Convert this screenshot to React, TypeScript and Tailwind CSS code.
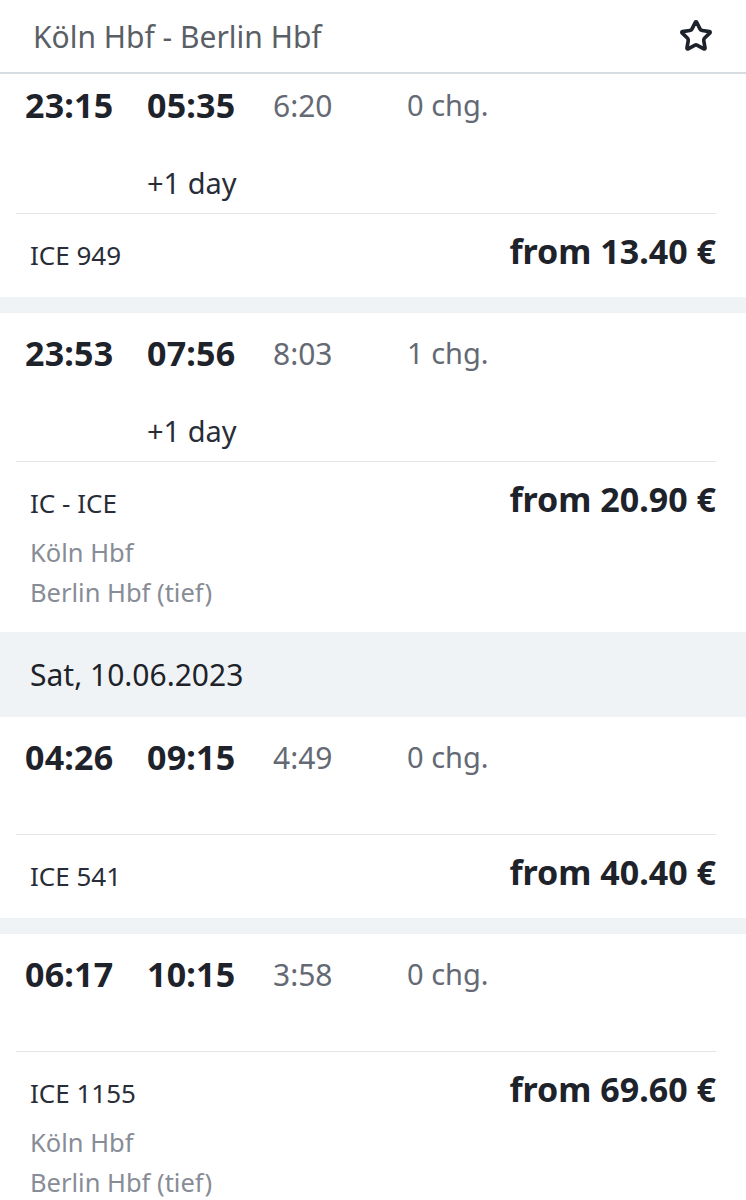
import { Star } from "lucide-react";

interface Connection {
  dep: string;
  arr: string;
  dur: string;
  chg: string;
  nextDay?: boolean;
  train: string;
  price: string;
  stations?: string[];
  first?: boolean;
}

const ConnectionCard = (props: Connection) => {
  return (
    <div className="bg-white">
      <div className={`ml-4 mr-[30px] ${props.first ? "pt-[13px]" : "pt-[22px]"}`}>
        {/* times row */}
        <div className="flex items-center h-[36px] pl-[9px]">
          <div className="w-[122px] text-[34px] font-bold text-[#1e232b] tracking-[0.2px]">{props.dep}</div>
          <div className="w-[126px] text-[34px] font-bold text-[#1e232b] tracking-[0.2px]">{props.arr}</div>
          <div className="w-[134px] text-[30px] text-[#646973]">{props.dur}</div>
          <div className="text-[29px] text-[#646973]">{props.chg}</div>
        </div>
        {props.nextDay ? (
          <div className="mt-[42px] h-[36px] pb-3 box-content flex items-center pl-[131px] text-[29px] text-[#282d37]">
            +1 day
          </div>
        ) : (
          <div className="h-[59px]"></div>
        )}
        <div className="border-t border-[#e3e5e9]"></div>
        {/* train + price */}
        <div className={`pt-6 ${props.stations ? "pb-5" : "pb-[25px]"}`}>
          <div className="flex justify-between items-start">
            <div className="pl-[14px] h-[34px] flex items-center text-[26px] text-[#282d37]">{props.train}</div>
            <div className="h-[34px] -mt-1 flex items-center text-[34px] font-bold text-[#1e232b]">{props.price}</div>
          </div>
          {props.stations && (
            <div className="mt-3 pl-[14px]">
              {props.stations.map((s) => (
                <div key={s} className="h-[40px] flex items-center text-[25.5px] text-[#878c96]">
                  {s}
                </div>
              ))}
            </div>
          )}
        </div>
      </div>
    </div>
  );
};

const Gap = () => <div className="h-4 bg-[#f0f3f5]"></div>;

export default function App() {
  return (
    <div className="w-[746px] h-[1200px] overflow-hidden bg-white" style={{ fontFamily: '"Noto Sans", sans-serif' }}>
      {/* header */}
      <div className="h-[74px] border-b-2 border-[#d7dce1] flex items-center justify-between pl-[33px] pr-[33px]">
        <div className="text-[30px] text-[#5a5f66]">Köln Hbf - Berlin Hbf</div>
        <Star size={34} strokeWidth={2.6} className="text-[#1e232b]" />
      </div>

      <ConnectionCard first dep="23:15" arr="05:35" dur="6:20" chg="0 chg." nextDay train="ICE 949" price="from 13.40 €" />
      <Gap />
      <ConnectionCard
        dep="23:53"
        arr="07:56"
        dur="8:03"
        chg="1 chg."
        nextDay
        train="IC - ICE"
        price="from 20.90 €"
        stations={["Köln Hbf", "Berlin Hbf (tief)"]}
      />
      <div className="h-[85px] bg-[#f0f3f5] flex items-center pl-[30px] text-[30px] text-[#1e232b]">
        Sat, 10.06.2023
      </div>
      <ConnectionCard dep="04:26" arr="09:15" dur="4:49" chg="0 chg." train="ICE 541" price="from 40.40 €" />
      <Gap />
      <ConnectionCard
        dep="06:17"
        arr="10:15"
        dur="3:58"
        chg="0 chg."
        train="ICE 1155"
        price="from 69.60 €"
        stations={["Köln Hbf", "Berlin Hbf (tief)"]}
      />
    </div>
  );
}
